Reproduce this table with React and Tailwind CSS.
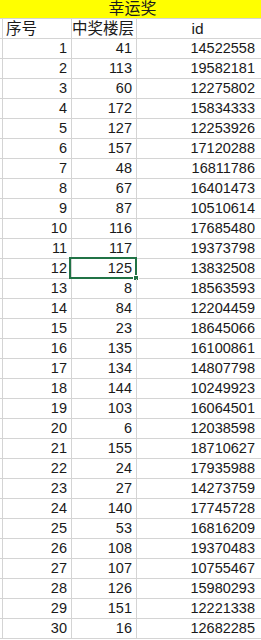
const rows = [
  [1, 41, 14522558],
  [2, 113, 19582181],
  [3, 60, 12275802],
  [4, 172, 15834333],
  [5, 127, 12253926],
  [6, 157, 17120288],
  [7, 48, 16811786],
  [8, 67, 16401473],
  [9, 87, 10510614],
  [10, 116, 17685480],
  [11, 117, 19373798],
  [12, 125, 13832508],
  [13, 8, 18563593],
  [14, 84, 12204459],
  [15, 23, 18645066],
  [16, 135, 16100861],
  [17, 134, 14807798],
  [18, 144, 10249923],
  [19, 103, 16064501],
  [20, 6, 12038598],
  [21, 155, 18710627],
  [22, 24, 17935988],
  [23, 27, 14273759],
  [24, 140, 17745728],
  [25, 53, 16816209],
  [26, 108, 19370483],
  [27, 107, 10755467],
  [28, 126, 15980293],
  [29, 151, 12221338],
  [30, 16, 12682285],
];

const font = { fontFamily: '"Liberation Sans", "Noto Sans CJK SC", sans-serif' };

export default function App() {
  return (
    <div
      className="w-[261px] h-[640px] overflow-hidden bg-white text-[#1a1a1a]"
      style={font}
    >
      <div className="h-[19px] bg-[#ffff00] border-b border-[#d4d4d4] flex items-end justify-center pl-[4px] text-[16px] leading-[19px]">
        幸运奖
      </div>
      <div className="grid grid-cols-[72px_65px_1fr] h-[20px] border-b border-[#d4d4d4] text-[15.5px] leading-[19px]">
        <div className="border-r border-[#d4d4d4] pl-[2px]">
          <div className="h-full border-l border-[#d4d4d4] pl-[3px]">序号</div>
        </div>
        <div className="border-r border-[#d4d4d4]">中奖楼层</div>
        <div className="text-center pr-[3px]">id</div>
      </div>
      {rows.map(([n, f, id]) => (
        <div
          key={n}
          className="grid grid-cols-[72px_65px_1fr] h-[20px] border-b border-[#d4d4d4] text-[14.5px] leading-[19px]"
        >
          <div className="border-r border-[#d4d4d4] pl-[2px]">
            <div className="h-full border-l border-[#d4d4d4] text-right pr-[4px]">{n}</div>
          </div>
          <div className="relative border-r border-[#d4d4d4] text-right pr-[4px]">
            {f}
            {n === 12 && (
              <div className="absolute -left-[3px] -top-[2px] w-[68px] h-[22px] border-2 border-[#217346]">
                <div className="absolute -right-[4px] -bottom-[4px] w-[6px] h-[6px] bg-[#217346] border border-white" />
              </div>
            )}
          </div>
          <div className="text-right pr-[6px]">{id}</div>
        </div>
      ))}
    </div>
  );
}
